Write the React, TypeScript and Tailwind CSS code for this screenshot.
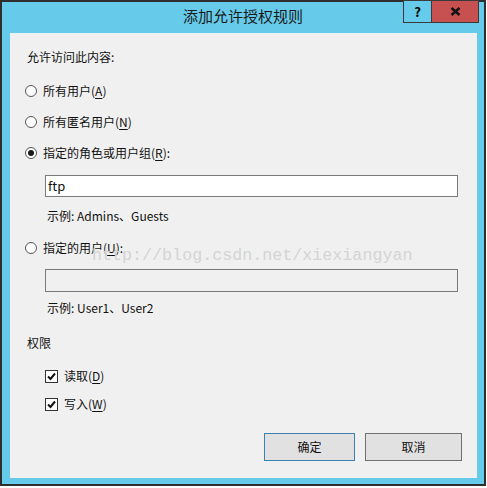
import React from "react";

const font = { fontFamily: '"Noto Sans CJK SC", "Noto Sans", sans-serif' };

function Radio({ checked }: { checked?: boolean }) {
  return (
    <span className="w-[12px] h-[12px] rounded-full border border-[#555] bg-white flex items-center justify-center shrink-0">
      {checked && <span className="w-[6px] h-[6px] rounded-full bg-[#1a1a1a]" />}
    </span>
  );
}

function Check() {
  return (
    <span className="w-[13px] h-[13px] border border-[#333] bg-white flex items-center justify-center shrink-0">
      <svg width="9" height="9" viewBox="0 0 9 9">
        <path d="M1 4.5 L3.5 7 L8 1.5" fill="none" stroke="#111" strokeWidth="2" />
      </svg>
    </span>
  );
}

function Key({ k }: { k: string }) {
  return (
    <>
      (<span className="underline underline-offset-2">{k}</span>)
    </>
  );
}

export default function App() {
  return (
    <div className="w-[487px] h-[488px] bg-white text-[12px] text-[#111]" style={font}>
      <div className="relative w-[486px] h-[486px] border-2 border-[#2e2e2e] bg-[#66cbea] flex flex-col">
        {/* title bar */}
        <div className="h-[31px] flex items-center justify-center text-[15px] text-[#1a1a1a] pb-[2px]">
          添加允许授权规则
        </div>
        <div className="absolute top-[-2px] right-[5px] flex h-[23px]">
          <div className="w-[29px] h-full border border-[#3a3a3a] bg-[#66cbea] flex items-center justify-center text-[13px] font-bold text-black">
            ?
          </div>
          <div className="w-[47px] h-full border border-l-0 border-[#3a3a3a] bg-[#c75050] flex items-center justify-center">
            <svg width="11" height="9" viewBox="0 0 11 9">
              <path d="M1.5 1 L9.5 8 M9.5 1 L1.5 8" stroke="#111" strokeWidth="2.4" />
            </svg>
          </div>
        </div>

        {/* content */}
        <div className="relative ml-[8px] w-[467px] h-[445px] bg-[#f0f0f0] flex flex-col pl-[17px] pt-[14px]">
          <div className="h-[20px] flex items-center">允许访问此内容:</div>

          <div className="mt-[14px] h-[20px] flex items-center gap-[6px] -ml-[2px]">
            <Radio />
            <span>所有用户<Key k="A" /></span>
          </div>
          <div className="mt-[11px] h-[20px] flex items-center gap-[6px] -ml-[2px]">
            <Radio />
            <span>所有匿名用户<Key k="N" /></span>
          </div>
          <div className="mt-[11px] h-[20px] flex items-center gap-[6px] -ml-[2px]">
            <Radio checked />
            <span>指定的角色或用户组<Key k="R" />:</span>
          </div>
          <div className="mt-[12px] ml-[18px] w-[413px] h-[22px] border border-[#7a7a7a] bg-white flex items-center px-[2px] text-[13px]">
            ftp
          </div>
          <div className="mt-[9px] ml-[20px] h-[20px] flex items-center">示例: Admins、Guests</div>

          <div className="mt-[12px] h-[20px] flex items-center gap-[6px] -ml-[2px]">
            <Radio />
            <span>指定的用户<Key k="U" />:</span>
          </div>
          <div className="mt-[11px] ml-[18px] w-[413px] h-[23px] border border-[#7a7a7a] bg-[#f0f0f0]" />
          <div className="mt-[6px] ml-[20px] h-[20px] flex items-center">示例: User1、User2</div>

          <div className="mt-[15px] h-[20px] flex items-center">权限</div>
          <div className="mt-[13px] ml-[18px] h-[20px] flex items-center gap-[6px]">
            <Check />
            <span>读取<Key k="D" /></span>
          </div>
          <div className="mt-[8px] ml-[18px] h-[20px] flex items-center gap-[6px]">
            <Check />
            <span>写入<Key k="W" /></span>
          </div>

          <div className="mt-[19px] ml-[237px] flex gap-[10px]">
            <button className="w-[91px] h-[28px] border border-[#3c7fb1] bg-[#e1e1e1] text-[12px] text-[#111]">
              确定
            </button>
            <button className="w-[97px] h-[28px] border border-[#707070] bg-[#e1e1e1] text-[12px] text-[#111]">
              取消
            </button>
          </div>

          {/* watermark */}
          <div
            className="absolute left-[82px] top-[211px] text-[16.7px] leading-[24px] text-[#d4d4d4] pointer-events-none"
            style={{ fontFamily: '"Liberation Mono", monospace' }}
          >
            http://blog.csdn.net/xiexiangyan
          </div>
        </div>
      </div>
    </div>
  );
}
